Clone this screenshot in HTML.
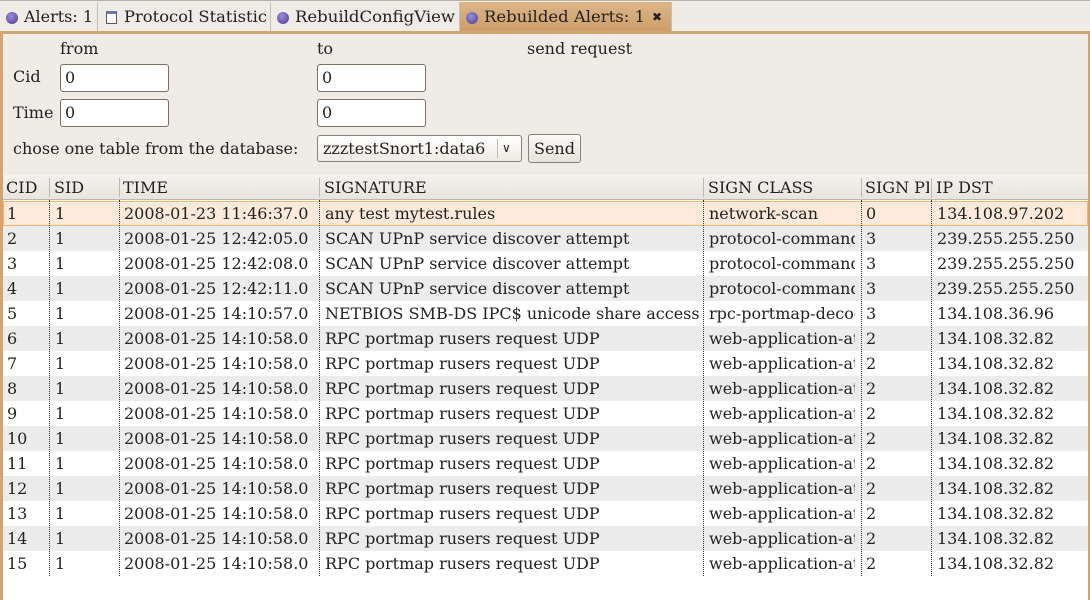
<!DOCTYPE html>
<html><head><style>
*{box-sizing:border-box;margin:0;padding:0}
body{width:1090px;height:600px;background:#fff;font-family:"DejaVu Serif","Liberation Serif",serif;font-size:16px;color:#222;position:relative;overflow:hidden}
.abs{position:absolute;white-space:nowrap}
.tabbar{position:absolute;left:0;top:0;width:1090px;height:32px;background:#efebe6;border-top:1px solid #b8b0a4}
.tab{position:absolute;top:1px;height:31px;background:#efebe6;border-right:1px solid #c8c0b4;line-height:30px;white-space:nowrap}
.tab .ic{position:absolute;left:6px;top:10px;width:12px;height:12px;border-radius:50%;background:radial-gradient(circle at 40% 35%,#9a8fd8,#4a3a90)}
.tab .t{position:absolute;top:0;display:inline-block;transform-origin:0 0}
.tab.act{background:linear-gradient(#dcb588,#cc9c66)}
.panel{position:absolute;left:0;top:31px;width:1090px;height:569px;background:#efebe6;border-left:3px solid #d4a470;border-top:3px solid #d4a470;border-right:2px solid #d4a470}
.inp{position:absolute;width:109px;height:28px;background:#fff;border:1px solid #7a7066;border-radius:3px;padding-left:4px;line-height:26px}
.tbl{position:absolute;left:3px;top:200px;width:1085px;height:400px;background:#fff}
.hdr{position:absolute;left:3px;top:175px;width:1085px;height:25px;background:linear-gradient(#f4f2ee,#e8e4de);border-bottom:1px solid #bcb6ae}
.row{position:absolute;left:3px;width:1085px;height:25px}
.row.g{background:#ececec}
.row.sel{background:#fdeadb;border:1px solid #f7b271}
.c{position:absolute;line-height:25px;white-space:nowrap;overflow:hidden}
.vl{position:absolute;top:200px;height:376px;border-left:1px dotted #333}
.hs{position:absolute;top:178px;height:19px;border-left:1px solid #c0b8ae}
</style></head><body>
<div class="tabbar">
<div class="tab" style="left:0;width:98px"><span class="ic"></span><span class="t" data-x="24" data-w="69">Alerts: 1</span></div>
<div class="tab" style="left:98px;width:173px"><span style="position:absolute;left:8px;top:9px;width:11px;height:13px;border:1px solid #556;background:#fff;border-top:3px solid #6a7ab0"></span><span class="t" data-x="26" data-w="143">Protocol Statistic</span></div>
<div class="tab" style="left:271px;width:189px"><span class="ic"></span><span class="t" data-x="24" data-w="160">RebuildConfigView</span></div>
<div class="tab act" style="left:460px;width:212px;height:32px"><span class="ic"></span><span class="t" data-x="24" data-w="161">Rebuilded Alerts: 1</span><span style="position:absolute;left:192px;top:0;font-size:12px;font-family:'DejaVu Sans',sans-serif">&#x2716;</span></div>
</div>
<div class="panel"></div>
<div class="abs" style="left:60px;top:39px">from</div>
<div class="abs" style="left:317px;top:39px">to</div>
<div class="abs" style="left:527px;top:39px">send request</div>
<div class="abs" style="left:13px;top:67px">Cid</div>
<div class="inp" style="left:60px;top:64px">0</div>
<div class="inp" style="left:317px;top:64px">0</div>
<div class="abs" style="left:13px;top:103px">Time</div>
<div class="inp" style="left:60px;top:99px">0</div>
<div class="inp" style="left:317px;top:99px">0</div>
<div class="abs" style="left:13px;top:139px">chose one table from the database:</div>
<div class="abs" style="left:317px;top:135px;width:205px;height:27px;border:1px solid #8a8076;border-radius:3px;background:linear-gradient(#fff,#efebe6);line-height:25px;padding-left:5px;overflow:hidden">zzztestSnort1:data6<span style="position:absolute;left:179px;top:3px;height:19px;border-left:1px solid #bbb"></span><span style="position:absolute;left:184px;top:0;font-family:'DejaVu Sans',sans-serif;font-size:12px">&#x2228;</span></div>
<div class="abs" style="left:528px;top:134px;width:53px;height:29px;border:1px solid #8a8076;border-radius:3px;background:linear-gradient(#fbfaf8,#e6e2dc);line-height:27px;text-align:center">Send</div>
<div class="tbl"></div>
<div class="hdr"></div>
<div id="rows"></div>
<script>
document.querySelectorAll('.tab .t').forEach(function(e){
 e.style.left=e.dataset.x+'px';
 var w=e.getBoundingClientRect().width;
 e.style.transform='scaleX('+(e.dataset.w/w)+')';
});
var cols=[7,55,124,325,709,866,937];
var w=[40,62,194,378,150,64,150];
var h=["CID","SID","TIME","SIGNATURE","SIGN CLASS","SIGN PRIO","IP DST"];
var s='';
for(var i=0;i<7;i++)s+='<div class="c" style="top:175px;left:'+(cols[i]-1)+'px;width:'+w[i]+'px">'+h[i]+'</div>';
[49,119,319,703,861,931].forEach(function(x){s+='<div class="hs" style="left:'+x+'px"></div>';});
var data=[
["1","1","2008-01-23 11:46:37.0","any test mytest.rules","network-scan","0","134.108.97.202"],
["2","1","2008-01-25 12:42:05.0","SCAN UPnP service discover attempt","protocol-command-decode","3","239.255.255.250"],
["3","1","2008-01-25 12:42:08.0","SCAN UPnP service discover attempt","protocol-command-decode","3","239.255.255.250"],
["4","1","2008-01-25 12:42:11.0","SCAN UPnP service discover attempt","protocol-command-decode","3","239.255.255.250"],
["5","1","2008-01-25 14:10:57.0","NETBIOS SMB-DS IPC$ unicode share access","rpc-portmap-decode","3","134.108.36.96"]];
for(var k=6;k<=15;k++)data.push([""+k,"1","2008-01-25 14:10:58.0","RPC portmap rusers request UDP","web-application-attack","2","134.108.32.82"]);
data.forEach(function(r,i){
 var t=201+i*25;
 s+='<div class="row'+(i==0?' sel':(i%2==1?' g':''))+'" style="top:'+t+'px"></div>';
 for(var j=0;j<7;j++)s+='<div class="c" style="top:'+t+'px;left:'+cols[j]+'px;width:'+(w[j]-4)+'px">'+r[j]+'</div>';
});
[49,119,319,703,861,931].forEach(function(x){s+='<div class="vl" style="left:'+x+'px"></div>';});
document.getElementById('rows').innerHTML=s;
</script>
</body></html>
